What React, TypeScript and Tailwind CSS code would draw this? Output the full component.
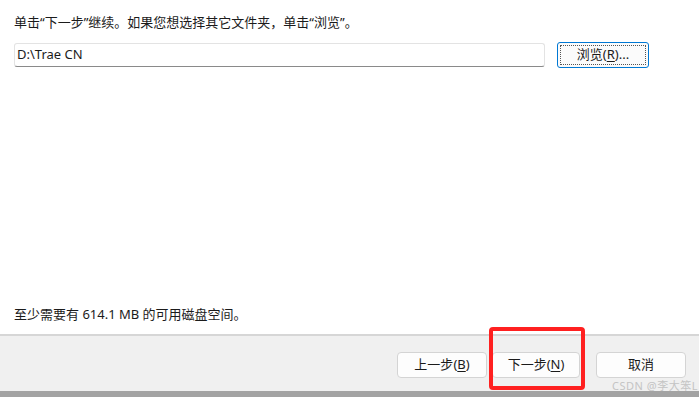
import React from 'react';

const font = {fontFamily: '"Noto Sans", "Noto Sans CJK SC", sans-serif'};

function Btn({label, hot, className = ''}: {label: string; hot?: string; className?: string}) {
  return (
    <button
      type="button"
      className={`h-[26px] rounded-[4px] border border-[#d4d4d4] bg-[#fdfdfd] text-[13px] text-[#1b1b1b] flex items-center justify-center ${className}`}
    >
      {label}
      {hot && (
        <span>
          (<span className="underline underline-offset-2">{hot}</span>)
        </span>
      )}
    </button>
  );
}

export default function App() {
  return (
    <div className="relative w-[699px] h-[397px] bg-white flex flex-col overflow-hidden text-[#1b1b1b]" style={font}>
      <div className="flex-1 flex flex-col px-[14px]">
        <p className="mt-[13px] text-[13px] leading-[18px]">
          单击“下一步”继续。如果您想选择其它文件夹，单击“浏览”。
        </p>
        <div className="flex items-center mt-[11px]">
          <div className="w-[531px] h-[24px] border border-[#e3e3e3] border-b-[#8a8a8a] rounded-[3px] flex items-center px-[2px] text-[13px]">
            D:\Trae CN
          </div>
          <button
            type="button"
            className="ml-[12px] w-[92px] h-[26px] rounded-[3px] border border-[#0078d4] bg-[#fbfbfb] p-[2px] text-[13px]"
          >
            <div className="w-full h-full border border-dotted border-[#555] flex items-center justify-center">
              浏览(<span className="underline underline-offset-2">R</span>)...
            </div>
          </button>
        </div>
        <div className="flex-1" />
        <p className="mb-[11px] text-[13px] leading-[18px]">至少需要有 614.1 MB 的可用磁盘空间。</p>
      </div>
      <div className="h-[2px] bg-[#d6d6d6]" />
      <div className="h-[55px] bg-[#f0f0f0] flex items-start justify-end pt-[16px] pr-[13px]">
        <Btn label="上一步" hot="B" className="w-[90px]" />
        <Btn label="下一步" hot="N" className="w-[88px] ml-[5px]" />
        <Btn label="取消" className="w-[90px] ml-[16px]" />
      </div>
      <div className="h-[6px] bg-[#a3a3a3]" />

      <div className="absolute left-[489px] top-[327px] w-[96px] h-[63px] border-[4px] border-[#ff2020] rounded-[4px]" />
      <div className="absolute left-[612px] top-[379px] text-[11px] leading-[14px] text-[#c4c4c4] tracking-[0.5px]">
        CSDN @李大笨L
      </div>
    </div>
  );
}
